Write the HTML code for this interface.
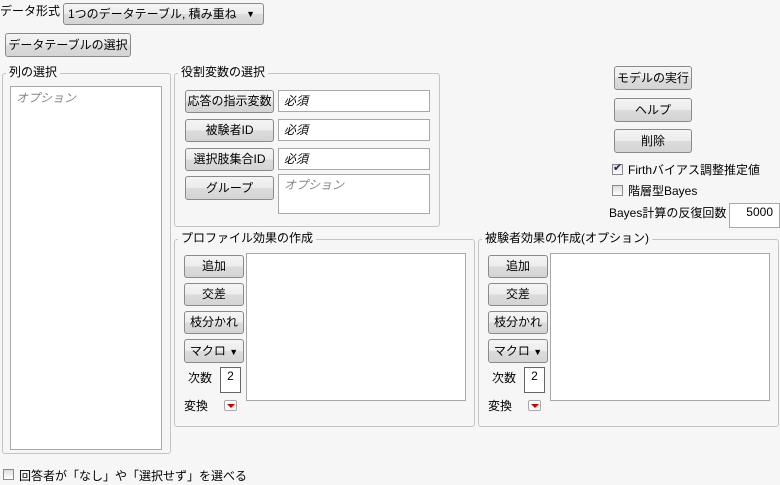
<!DOCTYPE html><html><head><meta charset="utf-8"><style>
body{margin:0;width:780px;height:485px;background:#f6f6f6;font-family:"Liberation Sans","Noto Sans CJK JP",sans-serif;font-size:12px;color:#000;position:relative;overflow:hidden}
.a{position:absolute;white-space:nowrap}
.btn{position:absolute;box-sizing:border-box;border:1px solid #8a8a8a;border-radius:3px;background:linear-gradient(#f4f4f4,#ececec 50%,#dcdcdc 50%,#d4d4d4);text-align:center;font-size:12px;white-space:nowrap;overflow:hidden}
.box{position:absolute;box-sizing:border-box;border:1px solid #a8a8a8;background:#fff;white-space:nowrap}
.grp{position:absolute;box-sizing:border-box;border:1px solid #c4c4c4;border-radius:3px}
.gt{position:absolute;background:#f6f6f6;padding:0 3px;line-height:14px;white-space:nowrap}
.it{font-style:italic;color:#888;padding-left:5px}
.cb{position:absolute;width:11px;height:11px;box-sizing:border-box;border:1px solid #8a8a8a;background:linear-gradient(#ddd,#fff)}
.red{position:absolute;width:13px;height:11px;box-sizing:border-box;border:1px solid #aaa;border-radius:2px;background:#fafafa}
.red:after{content:"";position:absolute;left:2px;top:3px;border-left:4px solid transparent;border-right:4px solid transparent;border-top:4px solid #c00}
</style></head><body>
<div class="a" style="left:0;top:2px">データ形式</div>
<div class="btn" style="left:63px;top:3px;width:201px;height:22px;line-height:20px;text-align:left;padding-left:4px">1つのデータテーブル, 積み重ね <span style="position:absolute;right:8px;font-size:9px">▼</span></div>
<div class="btn" style="left:5px;top:33px;width:126px;height:24px;line-height:22px">データテーブルの選択</div>

<div class="grp" style="left:2px;top:73px;width:169px;height:381px"></div>
<div class="gt" style="left:6px;top:65px">列の選択</div>
<div class="box" style="left:10px;top:86px;width:152px;height:364px"><div class="it" style="padding-top:2px">オプション</div></div>

<div class="grp" style="left:174px;top:73px;width:266px;height:154px"></div>
<div class="gt" style="left:178px;top:65px">役割変数の選択</div>
<div class="btn" style="left:185px;top:90px;width:89px;height:23px;line-height:21px">応答の指示変数</div>
<div class="btn" style="left:185px;top:119px;width:89px;height:23px;line-height:21px">被験者ID</div>
<div class="btn" style="left:185px;top:148px;width:89px;height:23px;line-height:21px">選択肢集合ID</div>
<div class="btn" style="left:185px;top:176px;width:89px;height:24px;line-height:22px">グループ</div>
<div class="box" style="left:278px;top:90px;width:152px;height:22px;line-height:20px"><span class="it" style="color:#000">必須</span></div>
<div class="box" style="left:278px;top:119px;width:152px;height:22px;line-height:20px"><span class="it" style="color:#000">必須</span></div>
<div class="box" style="left:278px;top:148px;width:152px;height:22px;line-height:20px"><span class="it" style="color:#000">必須</span></div>
<div class="box" style="left:278px;top:174px;width:152px;height:40px;line-height:20px"><span class="it">オプション</span></div>

<div class="btn" style="left:614px;top:66px;width:78px;height:24px;line-height:22px">モデルの実行</div>
<div class="btn" style="left:614px;top:98px;width:78px;height:24px;line-height:22px">ヘルプ</div>
<div class="btn" style="left:614px;top:129px;width:78px;height:24px;line-height:22px">削除</div>
<div class="cb" style="left:612px;top:164px"><span style="position:absolute;left:0;top:-4px;font-size:11px;color:#225">✔</span></div>
<div class="a" style="left:628px;top:161px">Firthバイアス調整推定値</div>
<div class="cb" style="left:612px;top:185px"></div>
<div class="a" style="left:628px;top:182px">階層型Bayes</div>
<div class="a" style="left:609px;top:204px">Bayes計算の反復回数</div>
<div class="box" style="left:729px;top:203px;width:51px;height:25px;text-align:right;padding-right:6px;line-height:16px">5000</div>

<div class="grp" style="left:174px;top:239px;width:301px;height:188px"></div>
<div class="gt" style="left:178px;top:231px">プロファイル効果の作成</div>
<div class="grp" style="left:478px;top:239px;width:301px;height:188px"></div>
<div class="gt" style="left:482px;top:231px">被験者効果の作成(オプション)</div>

<div class="btn" style="left:184px;top:255px;width:60px;height:23px;line-height:21px">追加</div>
<div class="btn" style="left:184px;top:283px;width:60px;height:23px;line-height:21px">交差</div>
<div class="btn" style="left:184px;top:311px;width:60px;height:23px;line-height:21px">枝分かれ</div>
<div class="btn" style="left:184px;top:339px;width:60px;height:24px;line-height:22px">マクロ <span style="font-size:9px">▼</span></div>
<div class="a" style="left:188px;top:369px">次数</div>
<div class="box" style="left:220px;top:367px;width:21px;height:26px;border-color:#666;text-align:center;line-height:16px">2</div>
<div class="a" style="left:184px;top:397px">変換</div>
<div class="red" style="left:224px;top:400px"></div>
<div class="box" style="left:246px;top:253px;width:220px;height:148px"></div>

<div class="btn" style="left:488px;top:255px;width:60px;height:23px;line-height:21px">追加</div>
<div class="btn" style="left:488px;top:283px;width:60px;height:23px;line-height:21px">交差</div>
<div class="btn" style="left:488px;top:311px;width:60px;height:23px;line-height:21px">枝分かれ</div>
<div class="btn" style="left:488px;top:339px;width:60px;height:24px;line-height:22px">マクロ <span style="font-size:9px">▼</span></div>
<div class="a" style="left:492px;top:369px">次数</div>
<div class="box" style="left:524px;top:367px;width:21px;height:26px;border-color:#666;text-align:center;line-height:16px">2</div>
<div class="a" style="left:488px;top:397px">変換</div>
<div class="red" style="left:528px;top:400px"></div>
<div class="box" style="left:550px;top:253px;width:220px;height:148px"></div>

<div class="cb" style="left:3px;top:469px"></div>
<div class="a" style="left:19px;top:467px">回答者が「なし」や「選択せず」を選べる</div>
</body></html>
